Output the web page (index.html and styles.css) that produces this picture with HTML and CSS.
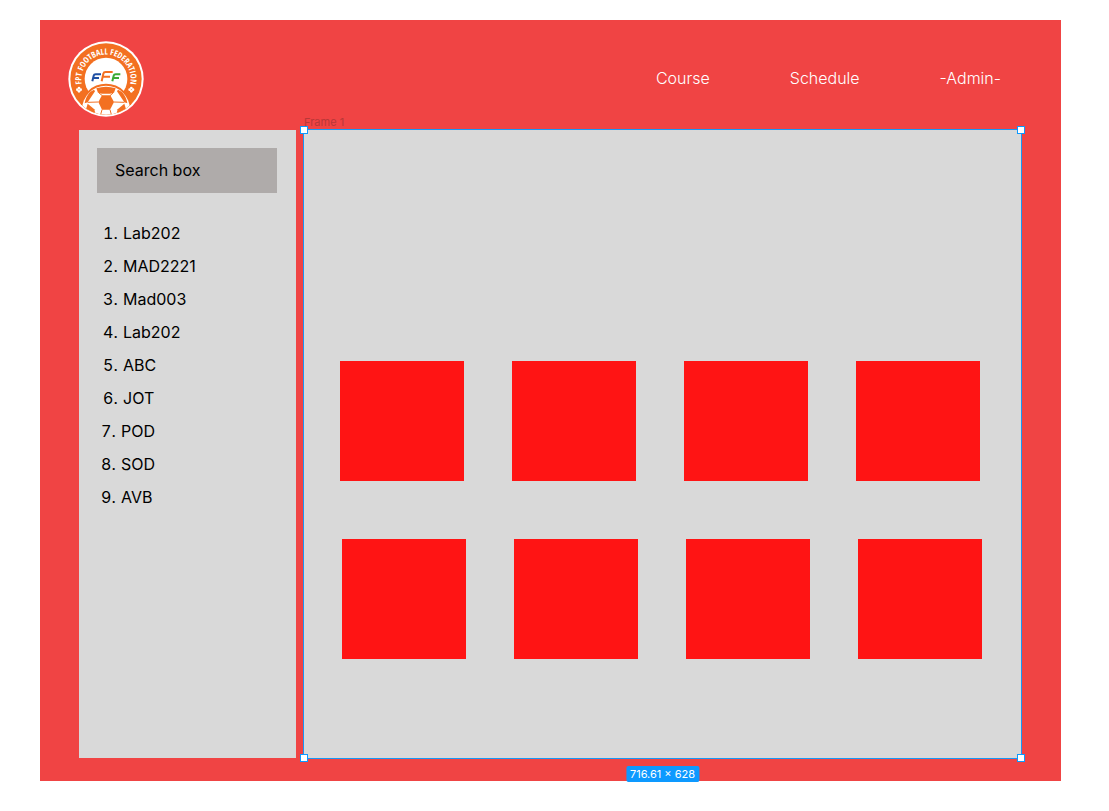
FILE: index.html
```html
<!DOCTYPE html>
<html lang="en">
<head>
<meta charset="utf-8">
<meta name="viewport" content="width=device-width, initial-scale=1">
<title>Course</title>
<link rel="stylesheet" href="styles.css">
</head>
<body>
<div class="board">
  <header class="header">
    <svg class="logo" viewBox="25 27 228 228" role="img" aria-label="FPT Football Federation">
      <defs>
        <clipPath id="badge"><circle cx="139" cy="141" r="107"/></clipPath>
        <path id="arc" d="M74 177A74 74 0 1 1 204 177"/>
      </defs>
      <circle cx="139" cy="141" r="113" fill="#fff"/>
      <circle cx="139" cy="141" r="107" fill="#f37021"/>
      <circle cx="139" cy="141" r="64" fill="#fff"/>
      <text class="logo-ring"><textPath href="#arc" startOffset="50%" text-anchor="middle">FPT FOOTBALL FEDERATION</textPath></text>
      <g fill="#fff">
        <circle cx="58" cy="168" r="4"/><circle cx="58" cy="178" r="4"/><circle cx="53" cy="173" r="4"/><circle cx="63" cy="173" r="4"/>
        <circle cx="215" cy="168" r="4"/><circle cx="215" cy="178" r="4"/><circle cx="210" cy="173" r="4"/><circle cx="220" cy="173" r="4"/>
      </g>
      <g fill="none" stroke-width="6" stroke-linejoin="round">
        <path stroke="#1f4fa3" d="M98 148L102 131Q103 127 108 127H124M101 138H118"/>
        <path stroke="#f37021" d="M126 148L131 125Q132 120 138 120H159M129 134H151"/>
        <path stroke="#3aaa35" d="M158 148L162 131Q163 127 168 127H182M161 138H178"/>
      </g>
      <g clip-path="url(#badge)">
        <circle cx="139" cy="232" r="77" fill="#f37021"/>
        <circle cx="139" cy="233" r="72" fill="#fff"/>
        <g fill="#f37021">
          <path d="M110 169Q139 159 168 169L163 182Q139 189 115 182Z"/>
          <path d="M127 190H152L163 210L151 233H127L116 210Z"/>
          <path d="M91 180L103 173L106 178L84 211L75 214Q78 194 91 180Z"/>
          <path d="M187 180L175 173L172 178L194 211L203 214Q200 194 187 180Z"/>
          <path d="M84 215L104 232L110 255H72Z"/>
          <path d="M194 215L174 232L168 255H206Z"/>
        </g>
        <path fill="none" stroke="#f37021" stroke-width="3" d="M118 183L128 191M160 183L151 191M116 210L84 211M162 210L194 211M127 233L121 255M151 233L157 255"/>
      </g>
    </svg>
    <nav class="nav">
      <a href="#course">Course</a>
      <a href="#schedule">Schedule</a>
      <a href="#admin">-Admin-</a>
    </nav>
  </header>
  <div class="columns">
    <aside class="sidebar">
      <input class="search" type="search" placeholder="Search box" aria-label="Search box">
      <ol class="labs">
        <li><span class="number">1.</span>Lab202</li>
        <li><span class="number">2.</span>MAD2221</li>
        <li><span class="number">3.</span>Mad003</li>
        <li><span class="number">4.</span>Lab202</li>
        <li><span class="number">5.</span>ABC</li>
        <li><span class="number">6.</span>JOT</li>
        <li class="typed"><span class="number">7.</span>POD</li>
        <li class="typed"><span class="number">8.</span>SOD</li>
        <li class="typed"><span class="number">9.</span>AVB</li>
      </ol>
    </aside>
    <main class="frame">
      <span class="frame-name">Frame 1</span>
      <div class="cards">
        <div class="card"></div><div class="card"></div><div class="card"></div><div class="card"></div>
      </div>
      <div class="cards cards-lower">
        <div class="card"></div><div class="card"></div><div class="card"></div><div class="card"></div>
      </div>
      <i class="handle top left"></i>
      <i class="handle top right"></i>
      <i class="handle bottom left"></i>
      <i class="handle bottom right"></i>
      <span class="frame-size">716.61 × 628</span>
    </main>
  </div>
</div>
</body>
</html>
```
FILE: styles.css
```css
* { box-sizing: border-box; }

body {
  margin: 0;
  padding: 20px 48px 30px 40px;
  background: #fff;
  color: #000;
  font: 16px/20px Inter, "Liberation Sans", sans-serif;
}

.board {
  padding-bottom: 23px;
  background: #f04444;
}

.header {
  display: flex;
  justify-content: space-between;
  align-items: flex-start;
  height: 110px;
  padding: 21px 60px 0 28px;
}

.logo {
  width: 76px;
  height: 76px;
}

.logo-ring {
  fill: #fff;
  font: bold 25px "Open Sans Condensed", "DejaVu Sans Condensed", Roboto, sans-serif;
}

.nav {
  display: flex;
  gap: 80px;
  padding-top: 27px;
}

.nav a {
  color: #fff;
  font-weight: 300;
  text-decoration: none;
}

.columns {
  display: grid;
  grid-template-columns: 217px 1fr;
  gap: 8px;
  padding: 0 40px 0 39px;
}

.sidebar {
  min-height: 628px;
  padding: 18px 19px 18px 18px;
  background: #d9d9d9;
}

.search {
  display: block;
  width: 100%;
  height: 45px;
  padding: 0 18px 2px;
  border: 0;
  border-radius: 0;
  background: #afabaa;
  color: #000;
  font: inherit;
  appearance: none;
}

.search::placeholder {
  color: #000;
  opacity: 1;
}

.labs {
  display: flex;
  flex-direction: column;
  gap: 13px;
  margin: 30px 0 0;
  padding: 0 0 0 4px;
  list-style: none;
}

.labs li { padding-left: 2px; }

.labs .typed { padding-left: 0; }

.number {
  display: inline-block;
  width: 15px;
  margin-right: 5px;
  font-variant-numeric: tabular-nums;
}

.frame {
  position: relative;
  padding: 231px 41px 99px 36px;
  background: #d9d9d9;
  outline: 1px solid #1a96f5;
}

.cards {
  display: grid;
  grid-template-columns: repeat(4, 1fr);
  gap: 48px;
}

.cards-lower {
  margin: 58px -2px 0 2px;
}

.card {
  height: 120px;
  background: #ff1414;
}

.frame-name {
  position: absolute;
  top: -15px;
  left: 0;
  color: #b93838;
  font-size: 11px;
  line-height: 14px;
}

.handle {
  position: absolute;
  width: 8px;
  height: 8px;
  border: 1px solid #0d99ff;
  background: #fff;
}

.top { top: -4px; }
.bottom { bottom: -4px; }
.left { left: -4px; }
.right { right: -4px; }

.frame-size {
  position: absolute;
  top: calc(100% + 8px);
  left: 50%;
  padding: 0 4px;
  border-radius: 2px;
  background: #0d99ff;
  color: #fff;
  font-size: 11px;
  line-height: 16px;
  white-space: nowrap;
  transform: translateX(-50%);
}
```
